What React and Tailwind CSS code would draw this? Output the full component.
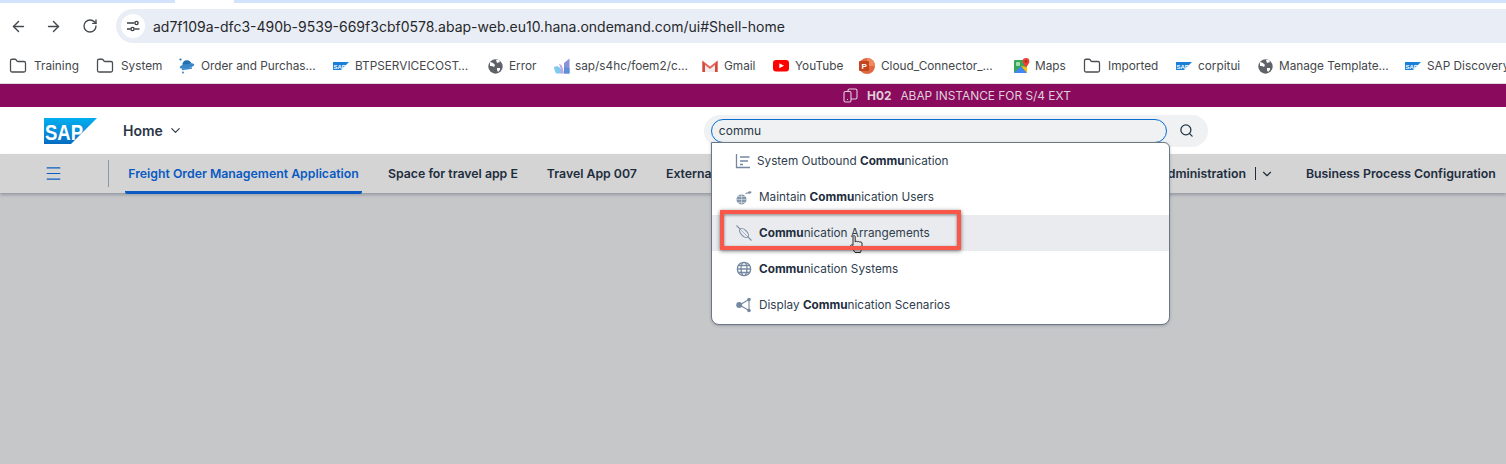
import React from "react";
import { ArrowLeft, ArrowRight, RotateCw, Folder, Search, ChevronDown, Menu } from "lucide-react";

const SapLogo = ({ w = 53, h = 26 }) => (
  <svg width={w} height={h} viewBox="0 0 53 26">
    <defs>
      <linearGradient id="sapg" x1="0" y1="0" x2="0" y2="1">
        <stop offset="0" stopColor="#00aeef" />
        <stop offset="0.5" stopColor="#0a8fdc" />
        <stop offset="1" stopColor="#056cc0" />
      </linearGradient>
    </defs>
    <polygon points="0,0 53,0 27,26 0,26" fill="url(#sapg)" />
    <text x="1" y="22" fontFamily="Liberation Sans, sans-serif" fontWeight="700" fontSize="22" fill="#fff" textLength="38" lengthAdjust="spacingAndGlyphs">SAP</text>
  </svg>
);

const SmallSap = () => (
  <svg width="16" height="8" viewBox="0 0 16 8" className="shrink-0">
    <polygon points="0,0 16,0 8,8 0,8" fill="#1a7fd8" />
    <text x="0.5" y="6.5" fontFamily="Liberation Sans, sans-serif" fontWeight="700" fontSize="6" fill="#fff">SAP</text>
  </svg>
);

const OrderIcon = () => (
  <svg width="16" height="16" viewBox="0 0 16 16" className="shrink-0">
    <ellipse cx="8" cy="8" rx="7.5" ry="2.4" fill="#3a87c8" transform="rotate(-12 8 8)" />
    <path d="M3.500 7a4.500 4 0 0 1 9-1.500z" fill="#1f6fb2" />
    <circle cx="1.500" cy="1.500" r="1.100" fill="#1f6fb2" />
    <circle cx="4" cy="14.500" r="1" fill="#3a87c8" />
    <path d="M3 11.500l10-1.500" stroke="#3a87c8" strokeWidth="1.300" />
  </svg>
);
const S4Icon = () => (
  <svg width="16" height="16" viewBox="0 0 16 16" className="shrink-0">
    <path d="M0 9c4-2 7 0 8 6.500H2C1 13 0 11 0 9z" fill="#7ecbee" />
    <path d="M5 6c3 0 4 4 5 9.500H7C7 11 6 8 5 6z" fill="#c3a6e6" />
    <path d="M10 15.500V5l5.500-4.500v15z" fill="#8a93d8" />
    <path d="M10 15.500V9l5.500 1v5.500z" fill="#5c8fd8" />
  </svg>
);
const GmailIcon = () => (
  <svg width="16" height="14" viewBox="0 0 16 14" className="shrink-0">
    <path d="M3 5.500V13h10V5.500L8 9.500z" fill="#f1eeee" />
    <path d="M0.500 13V1.500l7.500 6 7.500-6V13h-2.500V6L8 10 3 6v7z" fill="#e8645a" />
    <path d="M0.500 1.500L3 6v7H.5z" fill="#d64a3c" />
    <path d="M15.500 1.500L13 6v7h2.500z" fill="#d64a3c" />
  </svg>
);
const YouTubeIcon = () => (
  <svg width="16" height="12" viewBox="0 0 16 12" className="shrink-0">
    <rect width="16" height="11.500" rx="3" fill="#f00" />
    <polygon points="6.300,3.300 11,5.800 6.300,8.300" fill="#fff" />
  </svg>
);
const PptIcon = () => (
  <svg width="16" height="16" viewBox="0 0 16 16" className="shrink-0">
    <circle cx="8" cy="8" r="8" fill="#e0683e" />
    <path d="M8 0a8 8 0 0 1 8 8H8z" fill="#ee8a5c" />
    <rect x="0" y="3" width="10" height="10" rx="1" fill="#c2451f" />
    <text x="2.500" y="11" fontFamily="Liberation Sans, sans-serif" fontWeight="700" fontSize="8" fill="#fff">P</text>
  </svg>
);
const MapsIcon = () => (
  <svg width="16" height="16" viewBox="0 0 16 16" className="shrink-0">
    <rect x="0" y="2" width="13" height="13" rx="1" fill="#35a853" />
    <polygon points="0,15 7,8 13,15" fill="#4285f4" />
    <polygon points="7,8 13,15 13,9" fill="#fbbc04" />
    <rect x="2" y="4" width="4" height="4" rx="1" fill="#a8dab5" />
    <path d="M12 0a3.400 3.400 0 0 1 3.400 3.400C15.400 5.600 12 9 12 9S8.600 5.600 8.600 3.400A3.400 3.400 0 0 1 12 0z" fill="#ea4335" />
    <circle cx="12" cy="3.400" r="1.200" fill="#a52714" />
  </svg>
);

const Fold = () => <Folder size={18} strokeWidth={1.7} className="-ml-px shrink-0 text-[#4a4d52]" />;

const GlobeSolid = () => (
  <svg width="15" height="15" viewBox="0 0 15 15" className="shrink-0">
    <circle cx="7.500" cy="7.500" r="7.200" fill="#5f6368" />
    <path d="M2 3l3 1 2 2-1 2-2-1-2 0zM9 9l3 0 0 2-2 2-1-2zM8 1l3 0 1 2-3 1z" fill="#fff" />
  </svg>
);

const bookmarks = [
  { icon: <Fold />, label: "Training", cls: "w-[87px] gap-[7px]" },
  { icon: <Fold />, label: "System", cls: "w-[82px] gap-[7px]" },
  { icon: <OrderIcon />, label: "Order and Purchas…", cls: "w-[154px] gap-[6px]" },
  { icon: <SmallSap />, label: "BTPSERVICECOST…", cls: "w-[155px] gap-[6px]" },
  { icon: <GlobeSolid />, label: "Error", cls: "w-[66px] gap-[6px]" },
  { icon: <S4Icon />, label: "sap/s4hc/foem2/c…", cls: "w-[148px] gap-[5px]" },
  { icon: <GmailIcon />, label: "Gmail", cls: "w-[71px] gap-[6px]" },
  { icon: <YouTubeIcon />, label: "YouTube", cls: "w-[86px] gap-[6px]" },
  { icon: <PptIcon />, label: "Cloud_Connector_…", cls: "w-[155px] gap-[6px]" },
  { icon: <MapsIcon />, label: "Maps", cls: "w-[70px] gap-[5px]" },
  { icon: <Fold />, label: "Imported", cls: "w-[92px] gap-[7px]" },
  { icon: <SmallSap />, label: "corpitui", cls: "w-[82px] gap-[6px]" },
  { icon: <GlobeSolid />, label: "Manage Template…", cls: "w-[147px] gap-[6px]" },
  { icon: <SmallSap />, label: "SAP Discovery", cls: "w-[101px] gap-[6px]" },
];

const IcoOutbound = () => (
  <svg width="16" height="16" viewBox="0 0 16 16" fill="none" stroke="#7488a0" strokeWidth="1.300" className="shrink-0">
    <path d="M1.500 1v13.500H15" />
    <path d="M5 4h9.500M5 8h5M9 8h4M5 11.500h3" />
  </svg>
);
const IcoUsers = () => (
  <svg width="16" height="16" viewBox="0 0 16 16" fill="none" className="shrink-0">
    <circle cx="5.500" cy="10.500" r="5" fill="#8496ab" />
    <path d="M.5 10.500h10M5.500 5.500v10M2 7.500h7M2 13.500h7" stroke="#dfe5ec" strokeWidth="0.600" />
    <path d="M9.500 4.500l6-1.500" stroke="#7488a0" strokeWidth="1.100" />
    <circle cx="13.500" cy="3.500" r="1.300" fill="#7488a0" />
  </svg>
);
const IcoArr = () => (
  <svg width="16" height="16" viewBox="0 0 16 16" fill="none" stroke="#8091a7" strokeWidth="1.100" className="shrink-0">
    <path d="M.5 .5L4 4M12 12L15.500 15.500" />
    <ellipse cx="8" cy="8" rx="5.600" ry="3" transform="rotate(45 8 8)" />
    <path d="M4 4L12 12" strokeWidth="0.600" />
  </svg>
);
const IcoGlobe = () => (
  <svg width="16" height="16" viewBox="0 0 16 16" fill="none" stroke="#7488a0" strokeWidth="1.300" className="shrink-0">
    <circle cx="8" cy="8" r="6.700" />
    <ellipse cx="8" cy="8" rx="3" ry="6.700" />
    <path d="M1.300 8h13.400M2.300 4.500h11.400M2.300 11.500h11.400" />
  </svg>
);
const IcoShare = () => (
  <svg width="16" height="16" viewBox="0 0 16 16" fill="none" stroke="#7488a0" strokeWidth="1.100" className="shrink-0">
    <path d="M3.500 8L13 2.500V13.500L3.500 8" />
    <circle cx="3.200" cy="8" r="3" fill="#7488a0" stroke="none" />
    <circle cx="13" cy="2.500" r="1.800" fill="#7488a0" stroke="none" />
    <circle cx="13" cy="13.500" r="1.800" fill="#7488a0" stroke="none" />
  </svg>
);

const B = ({ children }) => <b className="font-bold text-[#1d2d3e]">{children}</b>;
const Match = () => <><B>Commu</B>nication</>;

const rows = [
  { icon: <IcoOutbound />, text: <>System Outbound <Match /></>, ml: "ml-[23px]", gap: "gap-[6px]" },
  { icon: <IcoUsers />, text: <>Maintain <Match /> Users</>, ml: "ml-[24px]", gap: "gap-[7px]" },
  { icon: <IcoArr />, text: <><Match /> Arrangements</>, ml: "ml-[24px]", gap: "gap-[7px]", active: true },
  { icon: <IcoGlobe />, text: <><Match /> Systems</>, ml: "ml-[24px]", gap: "gap-[7px]" },
  { icon: <IcoShare />, text: <>Display <Match /> Scenarios</>, ml: "ml-[24px]", gap: "gap-[7px]" },
];

export default function App() {
  return (
    <div className="relative flex h-[464px] w-[1506px] flex-col overflow-hidden bg-[#c6c7c9] font-['Inter',sans-serif]">
      {/* tab strip */}
      <div className="flex h-[3px] bg-[#d3e3fd]">
        <div className="ml-[175px] w-[59px] bg-white" />
      </div>
      {/* toolbar */}
      <div className="flex h-[46px] items-center bg-white pl-[10px]">
        <ArrowLeft size={17} strokeWidth={2} className="text-[#45484d]" />
        <ArrowRight size={17} strokeWidth={2} className="ml-[18px] text-[#45484d]" />
        <RotateCw size={16} strokeWidth={2} className="ml-[20px] text-[#45484d]" />
        <div className="ml-[18px] flex h-[34px] flex-1 items-center rounded-l-[17px] bg-[#e9edf6] pl-[5px]">
          <div className="flex h-[24px] w-[24px] items-center justify-center rounded-full bg-white">
            <svg width="14" height="12" viewBox="0 0 14 12" fill="none" stroke="#3c4043" strokeWidth="1.400">
              <path d="M1 3h7M1 9h3.500" />
              <circle cx="10.500" cy="3" r="1.600" />
              <circle cx="6.500" cy="9" r="1.600" />
              <path d="M8.500 9h5" />
            </svg>
          </div>
          <span className="ml-[8px] text-[14px] text-[#26282b]">ad7f109a-dfc3-490b-9539-669f3cbf0578.abap-web.eu10.hana.ondemand.com/ui#Shell-home</span>
        </div>
      </div>
      {/* bookmarks */}
      <div className="flex h-[34px] items-center overflow-hidden whitespace-nowrap bg-white pl-[10px] text-[11.8px] text-[#44474b]">
        {bookmarks.map((b) => (
          <div key={b.label} className={`flex shrink-0 items-center ${b.cls}`}>
            {b.icon}
            <span className="pt-px">{b.label}</span>
          </div>
        ))}
      </div>
      <div className="h-px bg-[#dcdcdc]" />
      {/* system banner */}
      <div className="flex h-[23px] items-center bg-[#8a0a5e] pl-[843px] text-[11.9px] text-[#ded0d8]">
        <svg width="15" height="15" viewBox="0 0 15 15" fill="none" stroke="#ded0d8" strokeWidth="1.100">
          <rect x="5" y="1" width="9" height="10" rx="1.500" />
          <rect x="1" y="3.500" width="7" height="10.500" rx="1.500" fill="#8a0a5e" />
          <path d="M4 11.500h1" />
        </svg>
        <span className="ml-[9px] font-bold">H02</span>
        <span className="ml-[9px]">ABAP INSTANCE FOR S/4 EXT</span>
      </div>
      {/* shell header */}
      <div className="flex h-[47px] items-center bg-white">
        <div className="ml-[44px] flex"><SapLogo /></div>
        <span className="ml-[26px] text-[14px] font-semibold text-[#2a3645]">Home</span>
        <ChevronDown size={15} strokeWidth={1.8} className="ml-[5px] text-[#2a3645]" />
        <div className="ml-[521px] flex h-[32px] w-[504px] items-center rounded-[16px] bg-[#eff1f2] pl-[7px]">
          <div className="flex h-[24px] w-[456px] items-center rounded-[12px] border border-[#0a6ed1] pl-[7px] text-[12px] text-[#2a3645]">commu</div>
          <Search size={15} strokeWidth={2} className="ml-[12px] text-[#223548]" />
        </div>
      </div>
      {/* nav */}
      <div className="flex h-[39px] items-stretch whitespace-nowrap bg-[#d4d4d4] text-[12.3px] font-semibold text-[#1d2d3e] shadow-[0_2px_3px_rgba(90,100,115,0.45)]">
        <div className="ml-[44px] flex items-center"><Menu size={19} strokeWidth={1.5} className="text-[#0a5fc0]" /></div>
        <div className="my-[6px] ml-[45px] w-px bg-[#8f98a2]" />
        <div className="mb-[-1px] ml-[16px] flex w-[237px] items-center justify-center rounded-b-[2px] border-b-[3px] border-[#0a5ac2] pt-[3px] text-[#0a5ac2]">Freight Order Management Application</div>
        <div className="ml-[26px] flex items-center pt-px">Space for travel app E</div>
        <div className="ml-[29px] flex items-center pt-px">Travel App 007</div>
        <div className="ml-[29px] flex w-[580px] items-center justify-between pt-px">
          <span>External API</span>
          <span>Administration</span>
        </div>
        <div className="my-[13px] ml-[9px] w-px bg-[#1d2d3e]" />
        <div className="ml-[4px] flex items-center"><ChevronDown size={14} strokeWidth={2} /></div>
        <div className="ml-[32px] flex items-center pt-px">Business Process Configuration</div>
      </div>

      {/* suggestions */}
      <div className="absolute left-[711px] top-[142px] h-[183px] w-[459px] rounded-b-[8px] rounded-tr-[6px] border border-[#6c7784] bg-white text-[11.75px] text-[#2f3d4d] shadow-[0_1px_3px_rgba(60,70,85,0.3)]">
        {rows.map((r, i) => (
          <div key={i} className={`flex h-[36px] items-center ${r.gap} ${r.active ? "bg-[#e9ebee]" : ""}`}>
            <div className={`flex ${r.ml}`}>{r.icon}</div>
            <span className="pt-px">{r.text}</span>
          </div>
        ))}
      </div>
      {/* cursor */}
      <svg className="absolute left-[850px] top-[235px]" width="15" height="19" viewBox="0 0 15 19">
        <path d="M3 1.500c0-1.200 2.200-1.200 2.200 0V7c.5-1 2.300-1 2.300 0 .3-.8 2.200-.8 2.200.3.500-.6 2.300-.4 2.300.7V12c0 2-1 3-1.500 5.500H5L1 11.500C0 10 1.800 9 3 10.500z" fill="#e9e9e9" stroke="#2a2a2a" strokeWidth="1" />
      </svg>
      {/* annotation */}
      <div className="pointer-events-none absolute left-[720px] top-[210px] h-[40px] w-[241px] border-[4px] border-[#f8574a] shadow-[0_1px_4px_rgba(0,0,0,0.55),inset_0_1px_3px_rgba(0,0,0,0.5)]" />
    </div>
  );
}
